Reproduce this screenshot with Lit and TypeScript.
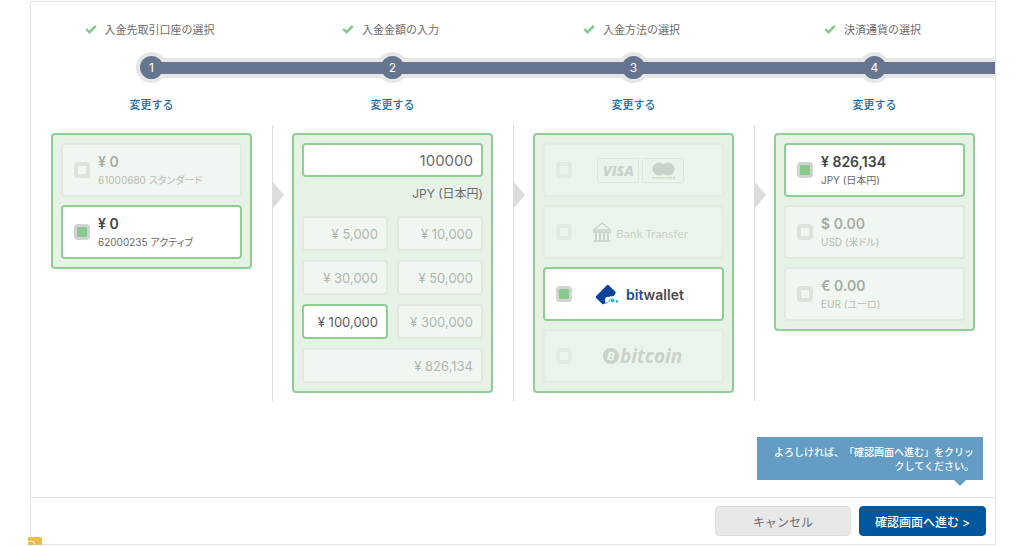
import { LitElement, html, css, svg } from "lit";
import { customElement, property, state } from "lit/decorators.js";
import { classMap } from "lit/directives/class-map.js";

interface Option {
  id: string;
  amount: string;
  note: string;
}

const steps = ["入金先取引口座の選択", "入金金額の入力", "入金方法の選択", "決済通貨の選択"];

const accounts: Option[] = [
  { id: "61000680", amount: "¥ 0", note: "61000680 スタンダード" },
  { id: "62000235", amount: "¥ 0", note: "62000235 アクティブ" },
];

const currencies: Option[] = [
  { id: "jpy", amount: "¥ 826,134", note: "JPY (日本円)" },
  { id: "usd", amount: "$ 0.00", note: "USD (米ドル)" },
  { id: "eur", amount: "€ 0.00", note: "EUR (ユーロ)" },
];

const amounts = [5000, 10000, 30000, 50000, 100000, 300000, 826134];

@customElement("method-logo")
export class MethodLogo extends LitElement {
  @property() name = "";

  static styles = css`
    :host {
      display: block;
    }
    svg {
      display: block;
    }
    .visa {
      font: italic 800 14px "Open Sans", sans-serif;
    }
    .mc {
      font: 700 4px "Open Sans", sans-serif;
    }
    .bank {
      font: 500 12px Lato, sans-serif;
    }
    .wallet {
      font: 600 14px Inter, sans-serif;
    }
    .coin {
      font: italic 700 19px "Noto Sans", sans-serif;
    }
    .coin-mark {
      font: 800 12px "Noto Sans", sans-serif;
    }
  `;

  private art() {
    switch (this.name) {
      case "card":
        return svg`
          <rect x="5.500" y="6.500" width="41" height="24" rx="1" fill="none" stroke="#bbb" />
          <rect x="50.500" y="6.500" width="41" height="24" rx="1" fill="none" stroke="#bbb" />
          <text class="visa" x="11" y="24" fill="#555">VISA</text>
          <circle cx="67" cy="17" r="6.500" fill="#555" />
          <circle cx="76" cy="17" r="6.500" fill="#555" />
          <text class="mc" x="71.500" y="27" text-anchor="middle" fill="#555">mastercard</text>`;
      case "bank":
        return svg`
          <g fill="none" stroke="#555" stroke-width="1.400">
            <path d="M1.500 16 10 9l8.500 7z" stroke-linejoin="round" />
            <path d="M1 18h18M1.500 27h17" />
            <path d="M4 18v9M8 18v9M12 18v9M16 18v9" stroke-width="2" />
          </g>
          <text class="bank" x="24" y="24" fill="#555">Bank Transfer</text>`;
      case "bitwallet":
        return svg`
          <path d="M14.800 9.300Q16 8.400 17 9.400L23.400 15.700Q24.200 16.600 23.400 17.400L21.500 20.200H18L13.500 26.800L12.200 28Q11.200 28.700 10.300 27.900L4 22Q3.100 21.100 4 20.200Z" fill="#0b429c" />
          <path d="M12.800 23.400A3.200 3.200 0 0 1 19 23Q18 27 13.600 28Z" fill="#fff" />
          <path d="M13 27.600Q17.300 26.600 18.600 22.600" fill="none" stroke="#25b7ea" stroke-width="1" />
          <circle cx="20.700" cy="24.400" r="1.900" fill="#25b7ea" />
          <circle cx="25" cy="25.400" r="1.300" fill="#25b7ea" />
          <text class="wallet" x="34" y="24" fill="#4c4c4c"><tspan fill="#1b4a9f">bit</tspan>wallet</text>`;
      default:
        return svg`
          <circle cx="19" cy="18" r="8" fill="#555" />
          <text class="coin-mark" x="19" y="22.500" text-anchor="middle" fill="#fff" transform="rotate(14 19 18)">B</text>
          <text class="coin" x="28" y="25" fill="#555">bitcoin</text>`;
    }
  }

  render() {
    return html`<svg width="100" height="36" viewBox="0 0 100 36" role="img" aria-label=${this.name}>
      ${this.art()}
    </svg>`;
  }
}

@customElement("app-root")
export class AppRoot extends LitElement {
  @state() private account = "62000235";
  @state() private method = "bitwallet";
  @state() private currency = "jpy";
  @state() private amount = 100000;

  static styles = css`
    :host {
      display: block;
      position: relative;
      background: #fff;
      color: #6a6a6a;
      font: 12px/16px Inter, "Noto Sans CJK JP", sans-serif;
    }
    * {
      box-sizing: border-box;
    }
    .panel {
      margin: 1px 28px 0 30px;
      border: 1px solid #e4e4e4;
    }
    .row {
      display: grid;
      grid-template-columns: repeat(4, 1fr);
    }
    .step {
      display: flex;
      flex-direction: column;
      padding-top: 20px;
    }
    .title {
      display: flex;
      justify-content: center;
      align-items: center;
      gap: 8px;
      padding-right: 4px;
      font-size: 11px;
    }
    .check {
      display: block;
      margin-bottom: 3px;
    }
    .track {
      display: grid;
      align-items: center;
      height: 31px;
      margin-top: 14px;
    }
    .track > * {
      grid-area: 1 / 1;
    }
    .rail {
      height: 20px;
      background: #e6e6e6;
    }
    .bar {
      height: 12px;
      background: #66758f;
    }
    .step:first-child .rail,
    .step:first-child .bar {
      margin-left: 50%;
    }
    .halo {
      justify-self: center;
      width: 31px;
      height: 31px;
      border-radius: 50%;
      background: #e6e6e6;
    }
    .dot {
      justify-self: center;
      width: 23px;
      height: 23px;
      border-radius: 50%;
      background: #66758f;
      color: #fff;
      font-size: 12px;
      line-height: 23px;
      text-align: center;
    }
    .change {
      align-self: center;
      margin-top: 14px;
      color: #1d6ca8;
      font-size: 11px;
      font-weight: 500;
      text-decoration: none;
    }
    .body {
      margin-top: 12px;
    }
    .col {
      position: relative;
      padding: 8px 20px;
    }
    .col + .col {
      padding-left: 19px;
      border-left: 1px solid #ddd;
    }
    .col + .col::before {
      content: "";
      position: absolute;
      left: 0;
      top: 57px;
      border: solid transparent;
      border-width: 13px 0 13px 11px;
      border-left-color: #dcdcdc;
    }
    .box {
      display: flex;
      flex-direction: column;
      gap: 8px;
      padding: 8px;
      border: 2px solid #8fce92;
      border-radius: 4px;
      background: #e6f2e6;
    }
    .option {
      display: flex;
      align-items: center;
      gap: 8px;
      height: 54px;
      padding: 0 11px;
      border: 2px solid #dcdcdc;
      border-radius: 4px;
      background: #fff;
      opacity: 0.4;
      cursor: pointer;
    }
    .option.logo {
      gap: 20px;
      opacity: 0.2;
    }
    .option.on {
      border-color: #8fce92;
      opacity: 1;
    }
    .radio {
      appearance: none;
      flex: none;
      width: 16px;
      height: 16px;
      margin: 0;
      border: 4px solid #cdcdcd;
      border-radius: 4px;
      background: #fff;
    }
    .radio:checked {
      border-width: 3px;
      border-color: #d2d2d2;
      background: #8aca8d;
    }
    .lines {
      display: flex;
      flex-direction: column;
      white-space: nowrap;
    }
    .sum {
      color: #444;
      font-size: 14px;
      font-weight: 600;
      line-height: 20px;
    }
    .note {
      font-size: 10px;
      line-height: 17px;
      font-feature-settings: "palt";
    }
    .money {
      display: block;
    }
    .field {
      display: block;
      width: 100%;
      height: 34px;
      padding: 0 8px;
      border: 2px solid #8fce92;
      border-radius: 4px;
      background: #fff;
      color: #6a6a6a;
      font: 15px Inter, sans-serif;
      text-align: right;
      outline: none;
    }
    .unit {
      display: block;
      margin-bottom: 5px;
      line-height: 34px;
      text-align: right;
    }
    .grid {
      display: grid;
      grid-template-columns: 1fr 1fr;
      gap: 9px;
    }
    .quick {
      height: 35px;
      padding: 0 8px;
      border: 2px solid #dcdcdc;
      border-radius: 4px;
      background: #fff;
      color: #5c5c5c;
      font: 13px Inter, sans-serif;
      text-align: right;
      opacity: 0.4;
      cursor: pointer;
    }
    .quick:last-child {
      grid-column: 1 / -1;
    }
    .quick.on {
      border-color: #8fce92;
      opacity: 1;
    }
    .tip {
      position: relative;
      width: 226px;
      margin: 36px 12px 17px auto;
      padding: 8px 9px 7px;
      background: #659cc4;
      color: #fff;
      font-size: 10px;
      font-weight: 500;
      line-height: 14px;
      text-align: right;
      text-spacing-trim: space-all;
    }
    .tip::after {
      content: "";
      position: absolute;
      right: 17px;
      top: 100%;
      border: solid transparent;
      border-width: 6px 6px 0;
      border-top-color: #659cc4;
    }
    .footer {
      display: flex;
      justify-content: flex-end;
      gap: 8px;
      padding: 8px 9px;
      border-top: 1px solid #e2e2e2;
    }
    .btn {
      height: 30px;
      padding: 0;
      border: 1px solid #dedede;
      border-radius: 4px;
      background: #e8e8e8;
      color: #6a6a6a;
      font: 12px Inter, "Noto Sans CJK JP", sans-serif;
      cursor: pointer;
    }
    .cancel {
      width: 136px;
    }
    .next {
      width: 127px;
      border-color: #00579b;
      background: #00579b;
      color: #fff;
      font-weight: 500;
    }
    .badge {
      position: absolute;
      left: 28px;
      bottom: 0;
      width: 14px;
      height: 8px;
      border-radius: 1px 2px 0 0;
      background: #edbb4c;
    }
  `;

  private options(name: string, items: Option[], current: string, pick: (id: string) => void) {
    return html`<div class="box" role="radiogroup">
      ${items.map(
        (o) => html`<label class=${classMap({ option: true, on: o.id === current })}>
          <input class="radio" type="radio" name=${name} .checked=${o.id === current} @change=${() => pick(o.id)} />
          <span class="lines"><span class="sum">${o.amount}</span><span class="note">${o.note}</span></span>
        </label>`
      )}
    </div>`;
  }

  render() {
    return html`
      <main class="panel">
        <div class="row">
          ${steps.map(
            (title, i) => html`<div class="step">
              <div class="title">
                <svg class="check" width="12" height="10" viewBox="0 0 12 10" aria-hidden="true">
                  <path d="M1.200 5 4.500 8.200 10.800 1.800" fill="none" stroke="#7fc986" stroke-width="2.400" />
                </svg>
                <span>${title}</span>
              </div>
              <div class="track">
                <span class="rail"></span><span class="halo"></span><span class="bar"></span
                ><span class="dot">${i + 1}</span>
              </div>
              <a class="change" href="#">変更する</a>
            </div>`
          )}
        </div>
        <div class="row body">
          <section class="col">
            ${this.options("account", accounts, this.account, (id) => (this.account = id))}
          </section>
          <section class="col">
            <div class="box money">
              <input
                class="field"
                id="amount"
                inputmode="numeric"
                .value=${String(this.amount)}
                @change=${(e: Event) => (this.amount = Number((e.target as HTMLInputElement).value) || 0)}
              />
              <label class="unit" for="amount">JPY (日本円)</label>
              <div class="grid">
                ${amounts.map(
                  (n) => html`<button
                    type="button"
                    class=${classMap({ quick: true, on: n === this.amount })}
                    @click=${() => (this.amount = n)}
                  >
                    ¥ ${n.toLocaleString("en-US")}
                  </button>`
                )}
              </div>
            </div>
          </section>
          <section class="col">
            <div class="box" role="radiogroup">
              ${["card", "bank", "bitwallet", "bitcoin"].map(
                (m) => html`<label class=${classMap({ option: true, logo: true, on: m === this.method })}>
                  <input
                    class="radio"
                    type="radio"
                    name="method"
                    aria-label=${m}
                    .checked=${m === this.method}
                    @change=${() => (this.method = m)}
                  />
                  <method-logo name=${m}></method-logo>
                </label>`
              )}
            </div>
          </section>
          <section class="col">
            ${this.options("currency", currencies, this.currency, (id) => (this.currency = id))}
          </section>
        </div>
        <div class="tip" role="status">よろしければ、「確認画面へ進む」をクリッ<br />クしてください。</div>
        <footer class="footer">
          <button type="button" class="btn cancel">キャンセル</button>
          <button type="button" class="btn next">確認画面へ進む &gt;</button>
        </footer>
      </main>
      <svg class="badge" viewBox="0 0 14 8" aria-hidden="true">
        <path d="M0 5Q4 3 6.500 6V8" fill="none" stroke="#f8e3b0" stroke-width="1.200" />
      </svg>
    `;
  }
}
